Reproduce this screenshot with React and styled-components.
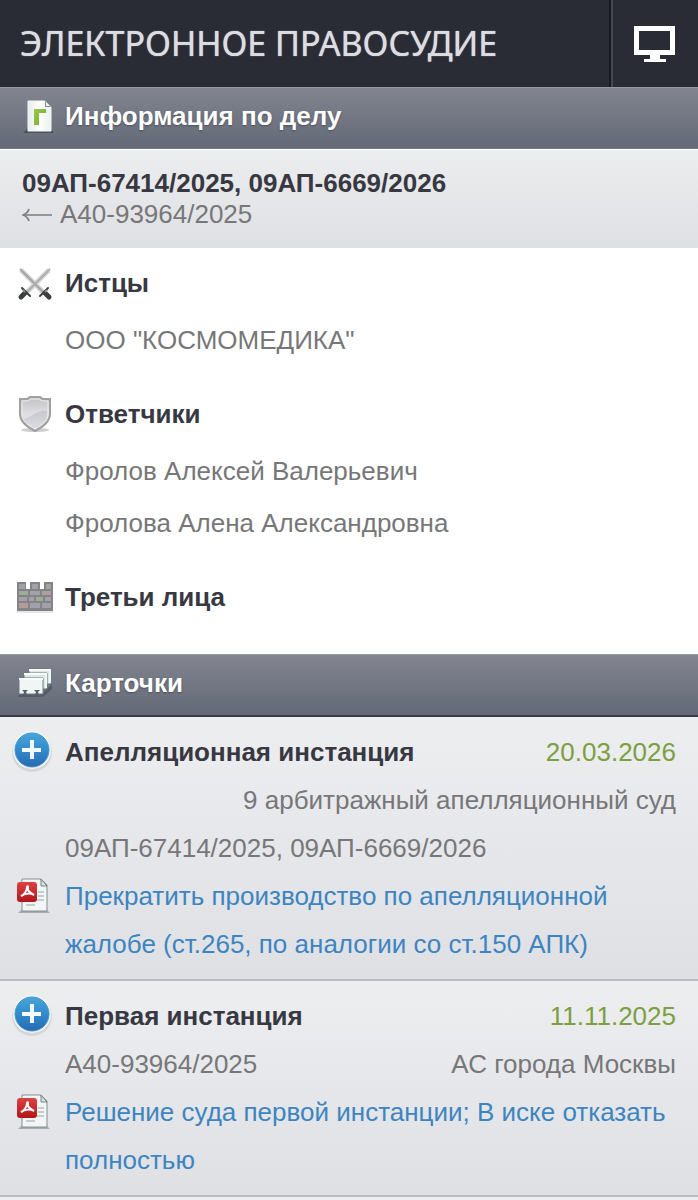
import React from "react";
import styled, { createGlobalStyle } from "styled-components";

const parties = [
  { title: "Истцы", icon: SwordsIcon, names: ['ООО "КОСМОМЕДИКА"'] },
  {
    title: "Ответчики",
    icon: ShieldIcon,
    names: ["Фролов Алексей Валерьевич", "Фролова Алена Александровна"],
  },
  { title: "Третьи лица", icon: WallIcon, names: [] },
];

const cards = [
  {
    title: "Апелляционная инстанция",
    date: "20.03.2026",
    number: "09АП-67414/2025, 09АП-6669/2026",
    court: "9 арбитражный апелляционный суд",
    result:
      "Прекратить производство по апелляционной жалобе (ст.265, по аналогии со ст.150 АПК)",
  },
  {
    title: "Первая инстанция",
    date: "11.11.2025",
    number: "А40-93964/2025",
    court: "АС города Москвы",
    result: "Решение суда первой инстанции; В иске отказать полностью",
  },
];

function App() {
  return (
    <>
      <GlobalStyle />
      <Header>
        <Brand>ЭЛЕКТРОННОЕ ПРАВОСУДИЕ</Brand>
        <DesktopButton type="button" aria-label="Полная версия">
          <MonitorIcon />
        </DesktopButton>
      </Header>
      <main>
        <SectionBar>
          <CaseIcon />
          <h2>Информация по делу</h2>
        </SectionBar>
        <CaseSummary>
          <h1>09АП-67414/2025, 09АП-6669/2026</h1>
          <p>
            <ArrowIcon />
            А40-93964/2025
          </p>
        </CaseSummary>
        <Parties>
          {parties.map(({ title, icon: Icon, names }) => (
            <Party key={title}>
              <PartyTitle>
                <Icon />
                <h3>{title}</h3>
              </PartyTitle>
              {names.length > 0 && (
                <PartyNames>
                  {names.map((name) => (
                    <li key={name}>{name}</li>
                  ))}
                </PartyNames>
              )}
            </Party>
          ))}
        </Parties>
        <SectionBar $dark>
          <CardsIcon />
          <h2>Карточки</h2>
        </SectionBar>
        {cards.map((card) => (
          <Card key={card.title}>
            <ExpandButton type="button" aria-label="Развернуть">
              <PlusIcon />
            </ExpandButton>
            <CardHead>
              <h3>{card.title}</h3>
              <time>{card.date}</time>
            </CardHead>
            <CardInfo>
              <span>{card.number}</span>
              <Court>{card.court}</Court>
            </CardInfo>
            <PdfIcon />
            <ResultLink href="#">{card.result}</ResultLink>
          </Card>
        ))}
      </main>
    </>
  );
}

export default App;

function MonitorIcon() {
  return (
    <svg width="42" height="36" viewBox="0 0 42 36" fill="#fff">
      <path
        fillRule="evenodd"
        d="M0 0H41V29H26V33H32V36H10V33H16V29H0ZM5 5V24H36V5Z"
      />
    </svg>
  );
}

function ArrowIcon() {
  return (
    <svg width="30" height="14" viewBox="0 0 30 14" fill="none" stroke="#808184">
      <path d="M1 7H30" strokeWidth="1.6" />
      <path d="M7 1C6 4 4 6 1 7C4 8 6 10 7 13" strokeWidth="1.8" />
    </svg>
  );
}

function CaseIcon() {
  return (
    <svg width="36" height="36" viewBox="0 0 36 36">
      <defs>
        <linearGradient id="page" x1="0" y1="0" x2="1" y2="0">
          <stop offset="0" stopColor="#e4edeb" />
          <stop offset="0.5" stopColor="#fff" />
          <stop offset="1" stopColor="#e9efef" />
        </linearGradient>
        <linearGradient id="green" x1="0" y1="0" x2="1" y2="1">
          <stop offset="0" stopColor="#9cc84b" />
          <stop offset="1" stopColor="#72ad2b" />
        </linearGradient>
      </defs>
      <path d="M5 35L9 31H33L36 35Z" fill="#4d535c" />
      <path d="M10 3H27L33 9V33H10Z" fill="url(#page)" stroke="#f4f8f7" />
      <path d="M27 3V9H33Z" fill="#7f8d92" />
      <path d="M28 4L32 8H28Z" fill="#eff5f4" />
      <path d="M16 11H28V15H21V27H16Z" fill="url(#green)" />
    </svg>
  );
}

function SwordsIcon() {
  return (
    <svg width="36" height="36" viewBox="0 0 36 36" fill="none">
      <path d="M4 5L26 27" stroke="#d6d6d6" strokeWidth="5" />
      <path d="M32 5L10 27" stroke="#d6d6d6" strokeWidth="5" />
      <path d="M3 4L26 27" stroke="#a3a3a3" strokeWidth="2" />
      <path d="M33 4L10 27" stroke="#adadad" strokeWidth="2" />
      <g stroke="#3c3f3f" strokeLinecap="round">
        <path d="M5 23L13 31M31 23L23 31" strokeWidth="2" />
        <path d="M8 28L4 32M28 28L32 32" strokeWidth="5" />
      </g>
      <path d="M6 25L8 27M30 25L28 27" stroke="#8c8e8e" strokeWidth="2" />
    </svg>
  );
}

function ShieldIcon() {
  return (
    <svg width="36" height="36" viewBox="0 0 36 36">
      <defs>
        <linearGradient id="shield" x1="0" y1="0" x2="0" y2="1">
          <stop offset="0" stopColor="#bfbfc1" />
          <stop offset="0.5" stopColor="#e0e0e2" />
          <stop offset="1" stopColor="#d2d2d9" />
        </linearGradient>
        <linearGradient id="shine" x1="0" y1="0" x2="0" y2="1">
          <stop offset="0" stopColor="#c6c6cf" />
          <stop offset="1" stopColor="#dcdce2" />
        </linearGradient>
      </defs>
      <ellipse cx="18" cy="34" rx="14" ry="2" fill="#cfcfcf" />
      <path
        d="M3 3H10L13 1H23L26 3H33V18C33 26 26 31 18 35C10 31 3 26 3 18Z"
        fill="url(#shield)"
        stroke="#a0a0a0"
        strokeWidth="2"
      />
      <path
        d="M6 23C14 23 17 14 30 15C31 25 24 29 18 32C13 30 8 27 6 23Z"
        fill="url(#shine)"
      />
      <path
        d="M5 5H11L14 3H22L25 5H31V18C31 25 25 29 18 33C11 29 5 25 5 18Z"
        fill="none"
        stroke="#ececed"
      />
    </svg>
  );
}

function WallIcon() {
  return (
    <svg width="36" height="32" viewBox="0 0 36 32">
      <path d="M0 1H9V8H13V1H23V8H27V1H36V30H0Z" fill="#858387" />
      <g fill="#a1a2a9">
        <path d="M2 3H8V8H2ZM15 3H21V8H15ZM29 3H34V8H29Z" />
        <path d="M13 10H23V14H13ZM2 16H10V20H2ZM12 16H17V20H12ZM28 16H34V20H28Z" />
        <path d="M13 22H23V27H13ZM25 22H34V27H25Z" />
      </g>
      <path d="M2 10H11V14H2ZM19 16H26V20H19Z" fill="#99ae96" />
      <path d="M25 10H34V14H25ZM2 22H11V27H2Z" fill="#b39c99" />
      <path d="M0 31H36" stroke="#ccc" />
    </svg>
  );
}

function CardsIcon() {
  return (
    <svg width="36" height="32" viewBox="0 0 36 32">
      <path d="M0 30L2 26H25L34 17V22L25 30H0Z" fill="#555c66" />
      <g fill="#dce8e5" stroke="#6d7a80">
        <path d="M11 2H33V17H11Z" />
        <path d="M6 6H29V22H6Z" />
        <path d="M1 11H25V27H1Z" fill="#f1f6f4" />
      </g>
      <path d="M11 3H33M6 7H29M1 12H25" stroke="#f9fcfb" strokeWidth="2" />
      <path d="M32 3V16M28 7V21" stroke="#f0f6f4" strokeWidth="2" />
      <path d="M4 23H10L8 25L9 28H5L6 25ZM16 23H22L20 25L21 28H17L18 25Z" fill="#53616a" />
    </svg>
  );
}

function PlusIcon() {
  return (
    <svg width="42" height="44" viewBox="0 0 42 44">
      <defs>
        <linearGradient id="plus" x1="0" y1="0" x2="0" y2="1">
          <stop offset="0" stopColor="#48a5dc" />
          <stop offset="0.5" stopColor="#338bcb" />
          <stop offset="1" stopColor="#2869b3" />
        </linearGradient>
      </defs>
      <circle cx="20" cy="22" r="20" fill="#d5d6d9" />
      <circle cx="20" cy="20" r="19" fill="#f3f5f7" />
      <circle cx="20" cy="20" r="17" fill="url(#plus)" stroke="#4096cc" />
      <path d="M10 20H29M20 10V29" stroke="#f3fbff" strokeWidth="4" />
    </svg>
  );
}

function PdfIcon() {
  return (
    <svg width="36" height="36" viewBox="0 0 36 36">
      <defs>
        <linearGradient id="pdf" x1="0" y1="0" x2="0" y2="1">
          <stop offset="0" stopColor="#dc4244" />
          <stop offset="1" stopColor="#b31519" />
        </linearGradient>
      </defs>
      <path d="M1 35L5 31H29L33 35Z" fill="#a6adae" />
      <path d="M5 1H24L30 7V33H5Z" fill="#f4f6f6" stroke="#819093" />
      <path d="M24 1V8H30Z" fill="#dce2e3" stroke="#718386" />
      <path d="M21 14H27M21 18H27M20 22H27M9 27H18" stroke="#c2cdcf" strokeWidth="2" />
      <rect x="0" y="4" width="20" height="20" rx="3" fill="url(#pdf)" />
      <path
        d="M4 18C7 17 10 13 10 9C10 8 11 8 11 9C10 12 13 15 17 17C14 15 8 15 4 18Z"
        fill="none"
        stroke="#fff"
        strokeWidth="2"
      />
    </svg>
  );
}

const GlobalStyle = createGlobalStyle`
  * {
    box-sizing: border-box;
  }
  body {
    margin: 0;
    background-color: #edeef0;
    color: #777779;
    font-family: "Liberation Sans", Arial, sans-serif;
    font-size: 26px;
  }
  h1,
  h2,
  h3,
  p,
  ul {
    margin: 0;
    padding: 0;
    font-size: inherit;
  }
  h1,
  h3 {
    color: #373841;
  }
  svg {
    display: block;
    flex-shrink: 0;
  }
`;

const Header = styled.header`
  display: flex;
  height: 87px;
  background-color: #2a2c35;
`;

const Brand = styled.div`
  flex: 1;
  padding-left: 20px;
  color: #dcdde0;
  font-family: "Noto Sans", "Open Sans", sans-serif;
  font-size: 34px;
  line-height: 86px;
  text-shadow: 0 0 1px #dcdde0;
  white-space: nowrap;
`;

const DesktopButton = styled.button`
  display: flex;
  align-items: center;
  justify-content: center;
  width: 89px;
  padding: 0;
  border: 0;
  border-left: 2px solid #1a1b22;
  box-shadow: inset 2px 0 #45464f;
  background: none;
`;

const SectionBar = styled.div`
  display: grid;
  grid-template-columns: 47px 1fr;
  align-items: center;
  height: ${(props) => (props.$dark ? "63px" : "62px")};
  padding: 0 22px 4px 18px;
  border-top: 1px solid #9498a1;
  border-bottom: ${(props) =>
    props.$dark ? "2px solid #3b3c48" : "1px solid #737985"};
  background: linear-gradient(#82858f, #636977);
  color: #fff;
  text-shadow: 0 1px 2px #4a4e59;
`;

const CaseSummary = styled.section`
  padding: 18px 22px;
  border-top: 1px solid #fff;
  background: linear-gradient(#ecedef, #dfe0e3);
  line-height: 31px;
  p {
    display: flex;
    align-items: center;
    gap: 8px;
  }
`;

const Parties = styled.div`
  padding: 4px 0 9px;
  background-color: #fff;
`;

const Party = styled.section`
  padding: 0 22px 17px 17px;
`;

const PartyTitle = styled.div`
  display: grid;
  grid-template-columns: 48px 1fr;
  align-items: center;
  height: 62px;
`;

const PartyNames = styled.ul`
  padding-left: 48px;
  line-height: 52px;
  list-style: none;
`;

const Card = styled.article`
  display: grid;
  grid-template-columns: 53px 1fr;
  padding: 11px 22px 11px 12px;
  border-bottom: 2px solid #bbbcc1;
  background: linear-gradient(#edeef0, #dfe0e4);
  line-height: 48px;
  > svg {
    margin: 6px 0 0 5px;
  }
`;

const ExpandButton = styled.button`
  width: 42px;
  height: 48px;
  padding: 0;
  border: 0;
  background: none;
`;

const CardHead = styled.div`
  display: flex;
  justify-content: space-between;
  time {
    color: #7d9f42;
  }
`;

const CardInfo = styled.div`
  display: flex;
  flex-wrap: wrap-reverse;
  grid-column: 2;
  justify-content: space-between;
`;

const Court = styled.span`
  margin-left: auto;
`;

const ResultLink = styled.a`
  color: #3d85c0;
  text-decoration: none;
`;
